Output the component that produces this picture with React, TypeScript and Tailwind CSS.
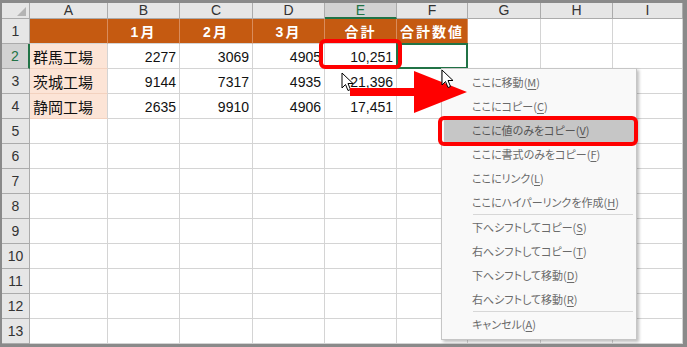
import React from 'react'

const cols = ['A', 'B', 'C', 'D', 'E', 'F', 'G', 'H', 'I']
const heads = ['', '1月', '2月', '3月', '合計', '合計数値']
const data = [
  ['群馬工場', '2277', '3069', '4905', '10,251'],
  ['茨城工場', '9144', '7317', '4935', '21,396'],
  ['静岡工場', '2635', '9910', '4906', '17,451'],
]

const menu: [string, string][] = [
  ['ここに移動', 'M'],
  ['ここにコピー', 'C'],
  ['ここに値のみをコピー', 'V'],
  ['ここに書式のみをコピー', 'F'],
  ['ここにリンク', 'L'],
  ['ここにハイパーリンクを作成', 'H'],
  ['下へシフトしてコピー', 'S'],
  ['右へシフトしてコピー', 'T'],
  ['下へシフトして移動', 'D'],
  ['右へシフトして移動', 'R'],
  ['キャンセル', 'A'],
]

const Cursor = ({ className }: { className: string }) => (
  <svg className={className} width="13" height="20" viewBox="0 0 13 20">
    <path
      d="M1 1 L1 16 L4.5 12.5 L7 18.5 L9.5 17.5 L7 11.5 L12 11.5 Z"
      fill="#fff"
      stroke="#000"
      strokeWidth="1"
      strokeLinejoin="round"
    />
  </svg>
)

export default function App() {
  return (
    <div className="relative h-[347px] w-[687px] overflow-hidden bg-[#8a8a8a] pt-[3px] pb-[3px] pl-[2px] pr-[4px] font-['Liberation_Sans','Noto_Sans_CJK_JP',sans-serif] text-[#222]">
      <div className="grid h-full grid-cols-[28px_78px_72px_73px_72px_72px_71px_73px_72px_1fr] grid-rows-[16px_repeat(13,25px)] bg-white">
        {/* column headers */}
        <div className="relative border-r border-b border-[#ababab] bg-[#e6e6e6]">
          <svg className="absolute right-[3px] bottom-[2px]" width="9" height="9" viewBox="0 0 9 9">
            <path d="M9 0 L9 9 L0 9 Z" fill="#b4b4b4" />
          </svg>
        </div>
        {cols.map(c => (
          <div
            key={c}
            className={
              c === 'E'
                ? 'flex items-center justify-center border-r border-b-2 border-r-[#ababab] border-b-[#217346] bg-[#d2d2d2] pt-[1px] text-[14px] text-[#217346]'
                : 'flex items-center justify-center border-r border-b border-[#ababab] bg-[#e6e6e6] text-[14px] text-[#333]'
            }
          >
            {c}
          </div>
        ))}

        {Array.from({ length: 13 }).map((_, r) => {
          const row = r + 1
          return (
            <React.Fragment key={row}>
              <div
                className={
                  row === 2
                    ? 'flex items-end justify-center border-r-2 border-b border-r-[#217346] border-b-[#ababab] bg-[#d2d2d2] pb-[1px] text-[14px] text-[#217346]'
                    : 'flex items-end justify-center border-r border-b border-[#ababab] bg-[#e6e6e6] pb-[1px] text-[14px] text-[#333]'
                }
              >
                {row}
              </div>
              {cols.map((c, ci) => {
                if (row === 1 && ci < 6) {
                  return (
                    <div
                      key={c}
                      className="flex items-center justify-center border-r border-b border-r-[#d98c5c] border-b-[#d4d4d4] bg-[#c55a11] pt-[2px] text-[14px] font-bold tracking-[2px] text-white"
                    >
                      {heads[ci]}
                    </div>
                  )
                }
                if (row >= 2 && row <= 4 && ci < 5) {
                  const v = data[row - 2][ci]
                  if (ci === 0) {
                    return (
                      <div
                        key={c}
                        className="flex items-center border-r border-b border-r-[#d4d4d4] border-b-[#f3d2bf] bg-[#fce4d6] pt-[2px] pl-[3px] font-['Noto_Sans_CJK_JP',sans-serif] text-[15px] text-[#111]"
                      >
                        {v}
                      </div>
                    )
                  }
                  return (
                    <div
                      key={c}
                      className="flex items-center justify-end border-r border-b border-[#d4d4d4] pt-[3px] pr-[3px] text-[14px] text-[#111]"
                    >
                      {v}
                    </div>
                  )
                }
                if (row === 2 && c === 'F') {
                  return (
                    <div key={c} className="relative border-r border-b border-[#d4d4d4]">
                      <div className="absolute -top-[1px] -left-[1px] h-[26px] w-[72px] border-2 border-[#217346]" />
                    </div>
                  )
                }
                return <div key={c} className="border-r border-b border-[#d4d4d4]" />
              })}
            </React.Fragment>
          )
        })}
      </div>

      {/* red frame around E2 */}
      <div className="absolute top-[39px] left-[319px] h-[30px] w-[83px] rounded-[6px] border-4 border-[#ff0000]" />

      <Cursor className="absolute top-[72px] left-[341px]" />

      {/* context menu */}
      <div className="absolute top-[68px] left-[441px] w-[196px] border border-[#c6c6c6] bg-[#f9f9f9] pt-[1px] pb-[3px] font-['Noto_Sans_CJK_JP',sans-serif] text-[11px] text-[#6a6a6a] [font-feature-settings:'palt'] shadow-[2px_2px_3px_rgba(0,0,0,0.25)]">
        {menu.map(([label, key], i) => (
          <React.Fragment key={label}>
            <div
              className={
                i === 2
                  ? 'mx-[2px] flex h-[24px] items-center whitespace-nowrap bg-[#c6c6c6] pl-[28px] text-[#555]'
                  : 'mx-[2px] flex h-[24px] items-center whitespace-nowrap pl-[28px]'
              }
            >
              {label}(<span className="underline underline-offset-2">{key}</span>)
            </div>
            {(i === 5 || i === 9) && <div className="mr-[3px] ml-[31px] h-px bg-[#d7d7d7]" />}
          </React.Fragment>
        ))}
      </div>

      {/* red frame around highlighted item */}
      <div className="absolute top-[116px] left-[438px] h-[30px] w-[200px] rounded-[6px] border-4 border-[#ff0000]" />

      {/* red arrow */}
      <svg className="absolute top-[68px] left-[348px]" width="122" height="50" viewBox="0 0 122 50">
        <path d="M2 20 L66 20 L66 3 L119 24 L66 45 L66 28 L2 28 Z" fill="#ff0000" />
      </svg>

      <Cursor className="absolute top-[69px] left-[441px]" />
    </div>
  )
}
